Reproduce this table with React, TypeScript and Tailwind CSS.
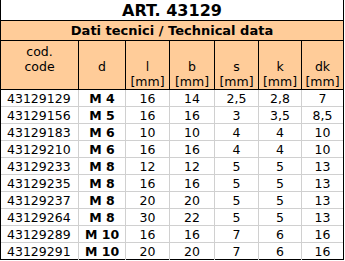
const rows = [
  ['43129129', 'M 4', '16', '14', '2,5', '2,8', '7'],
  ['43129156', 'M 5', '16', '16', '3', '3,5', '8,5'],
  ['43129183', 'M 6', '10', '10', '4', '4', '10'],
  ['43129210', 'M 6', '16', '16', '4', '4', '10'],
  ['43129233', 'M 8', '12', '12', '5', '5', '13'],
  ['43129235', 'M 8', '16', '16', '5', '5', '13'],
  ['43129237', 'M 8', '20', '20', '5', '5', '13'],
  ['43129264', 'M 8', '30', '22', '5', '5', '13'],
  ['43129289', 'M 10', '16', '16', '7', '6', '16'],
  ['43129291', 'M 10', '20', '20', '7', '6', '16'],
]

const units = ['l', 'b', 's', 'k', 'dk']

export default function App() {
  return (
    <div className="w-[344px] bg-white text-black border-l border-r border-b border-black font-['DejaVu_Sans',sans-serif]">
      {/* Title */}
      <div className="h-[21px] border-b border-black flex items-center justify-center pt-[1px] text-[16px] font-bold">
        ART. 43129
      </div>
      <div className="h-[20px] border-b border-black bg-[#ffcc99] flex items-center justify-center text-[13px] font-bold">
        Dati tecnici / Technical data
      </div>

      {/* Header */}
      <div className="grid grid-cols-[78px_47px_44px_45px_44px_43px_41px] h-[49px] border-b border-black bg-[#ffcc99] text-[12.5px] leading-[15px]">
        <div className="border-r border-black flex flex-col items-center justify-end pb-[15px]">
          <span>cod.</span>
          <span>code</span>
        </div>
        <div className="border-r border-black flex flex-col items-center justify-end pb-[15px]">
          <span>d</span>
        </div>
        {units.map((u, i) => (
          <div
            key={u}
            className={`flex flex-col items-center justify-end ${i < units.length - 1 ? 'border-r border-black' : ''}`}
          >
            <span>{u}</span>
            <span>[mm]</span>
          </div>
        ))}
      </div>

      {/* Data */}
      {rows.map((r, ri) => (
        <div
          key={r[0]}
          className={`grid grid-cols-[78px_47px_44px_45px_44px_43px_41px] text-[12.5px] ${ri < rows.length - 1 ? 'h-[17px] border-b border-[#d0d0d0]' : 'h-[16px]'}`}
        >
          {r.map((c, ci) => (
            <div
              key={ci}
              className={`flex items-center ${ci === 0 ? 'pl-[6px]' : 'justify-center'} ${ci === 1 ? 'font-bold' : ''} ${ci < 6 ? 'border-r border-[#d0d0d0]' : ''}`}
            >
              {c}
            </div>
          ))}
        </div>
      ))}
    </div>
  )
}
